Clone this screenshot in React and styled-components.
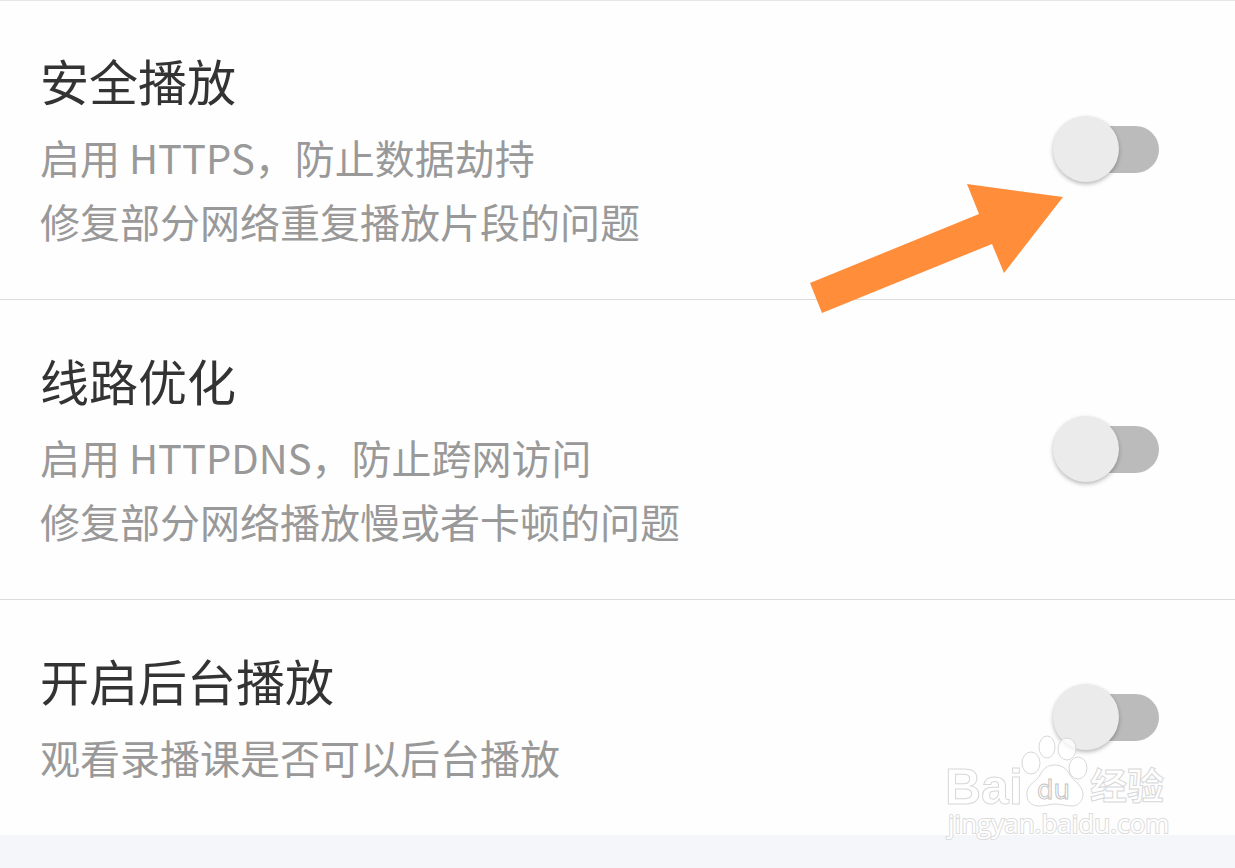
import { useState } from "react";
import styled, { createGlobalStyle } from "styled-components";

const settings = [
  {
    id: "safe-play",
    title: "安全播放",
    lines: ["启用 HTTPS，防止数据劫持", "修复部分网络重复播放片段的问题"],
  },
  {
    id: "route",
    title: "线路优化",
    lines: ["启用 HTTPDNS，防止跨网访问", "修复部分网络播放慢或者卡顿的问题"],
  },
  {
    id: "background-play",
    title: "开启后台播放",
    lines: ["观看录播课是否可以后台播放"],
  },
];

const Pointer = () => (
  <PointerSvg viewBox="0 0 256 132" aria-hidden="true">
    <path
      d="M1 101 170 32 158 2 254 15 195 91 183 62 13 131Z"
      fill="#ff8d3a"
    />
  </PointerSvg>
);

const Watermark = () => (
  <WatermarkSvg viewBox="0 0 236 115">
    <g fill="#fff" fillOpacity="0.75" stroke="#d8d8d8">
      <ellipse cx="107" cy="17" rx="8" ry="11" />
      <ellipse cx="127" cy="19" rx="9" ry="11" />
      <ellipse cx="91" cy="33" rx="9" ry="11" />
      <ellipse cx="138" cy="38" rx="9" ry="11" />
      <path d="M115 35C107 35 103 39 100 45C97 51 88 54 87 62C86 71 91 76 99 76C106 76 109 74 115 74C121 74 126 76 132 76C139 76 143 70 143 64C142 54 133 51 130 45C127 39 122 35 115 35Z" />
    </g>
    <Brand x="5" y="74">
      Bai
    </Brand>
    <BrandSmall x="97" y="69">
      du
    </BrandSmall>
    <BrandCn x="150" y="70">
      经验
    </BrandCn>
    <BrandUrl x="8" y="103">
      jingyan.baidu.com
    </BrandUrl>
  </WatermarkSvg>
);

const App = () => {
  const [enabled, setEnabled] = useState({});

  const toggle = (id) => setEnabled({ ...enabled, [id]: !enabled[id] });

  return (
    <Page>
      <GlobalStyle />
      <List>
        {settings.map(({ id, title, lines }, index) => (
          <Row key={id}>
            <Info htmlFor={id}>
              <Title>{title}</Title>
              {lines.map((line) => (
                <Description key={line}>{line}</Description>
              ))}
            </Info>
            <Switch
              id={id}
              type="checkbox"
              role="switch"
              checked={!!enabled[id]}
              onChange={() => toggle(id)}
            />
            {index === 0 && <Pointer />}
            {index === settings.length - 1 && <Watermark />}
          </Row>
        ))}
      </List>
    </Page>
  );
};

const GlobalStyle = createGlobalStyle`
  body {
    margin: 0;
    font-family: "Noto Sans CJK SC", sans-serif;
  }
`;

const Page = styled.div`
  min-height: 100vh;
  background: #f5f6fa;
`;

const List = styled.main`
  background: #fefefe;
  box-shadow: inset 0 1px 0 #e6e6e6;
`;

const Row = styled.section`
  position: relative;
  display: flex;
  align-items: center;
  justify-content: space-between;
  gap: 40px;
  padding: 48px 76px 46px 40px;

  &:not(:last-child) {
    border-bottom: 1px solid #dcdcdc;
  }
`;

const Info = styled.label`
  display: flex;
  flex-direction: column;
`;

const Title = styled.span`
  margin-bottom: 13px;
  color: #333;
  font-size: 49px;
  line-height: 64px;
`;

const Description = styled.span`
  color: #999;
  font-size: 40px;
  line-height: 64px;
`;

const Switch = styled.input`
  appearance: none;
  display: grid;
  align-items: center;
  flex-shrink: 0;
  width: 106px;
  height: 66px;
  margin: 0 0 3px;
  cursor: pointer;

  &::before,
  &::after {
    content: "";
    grid-area: 1 / 1;
  }

  &::before {
    height: 47px;
    margin-left: 12px;
    border-radius: 24px;
    background: #bbb;
  }

  &::after {
    width: 66px;
    height: 66px;
    border-radius: 50%;
    background: #ebebeb;
    box-shadow: 0 2px 4px rgba(0, 0, 0, 0.28);
  }

  &:checked::before {
    background: #ffc69c;
  }

  &:checked::after {
    justify-self: end;
    background: #ff8d3a;
  }
`;

const PointerSvg = styled.svg`
  position: absolute;
  right: 170px;
  bottom: -15px;
  z-index: 1;
  width: 256px;
  height: 132px;
  pointer-events: none;
`;

const WatermarkSvg = styled.svg`
  position: absolute;
  right: 59px;
  bottom: -10px;
  width: 236px;
  height: 115px;
  pointer-events: none;
`;

const Brand = styled.text`
  fill: #fff;
  stroke: #d8d8d8;
  font-family: "Liberation Sans", sans-serif;
  font-size: 50px;
  font-weight: 700;
`;

const BrandSmall = styled(Brand)`
  stroke: #c4c4c4;
  font-family: "DejaVu Sans", sans-serif;
  font-size: 26px;
  font-weight: 400;
`;

const BrandCn = styled(Brand)`
  font-family: "Noto Sans CJK SC", sans-serif;
  font-size: 37px;
`;

const BrandUrl = styled(Brand)`
  stroke: #dcdcdc;
  stroke-width: 2px;
  paint-order: stroke;
  font-family: "Open Sans", sans-serif;
  font-size: 26px;
  font-weight: 400;
`;

export default App;
